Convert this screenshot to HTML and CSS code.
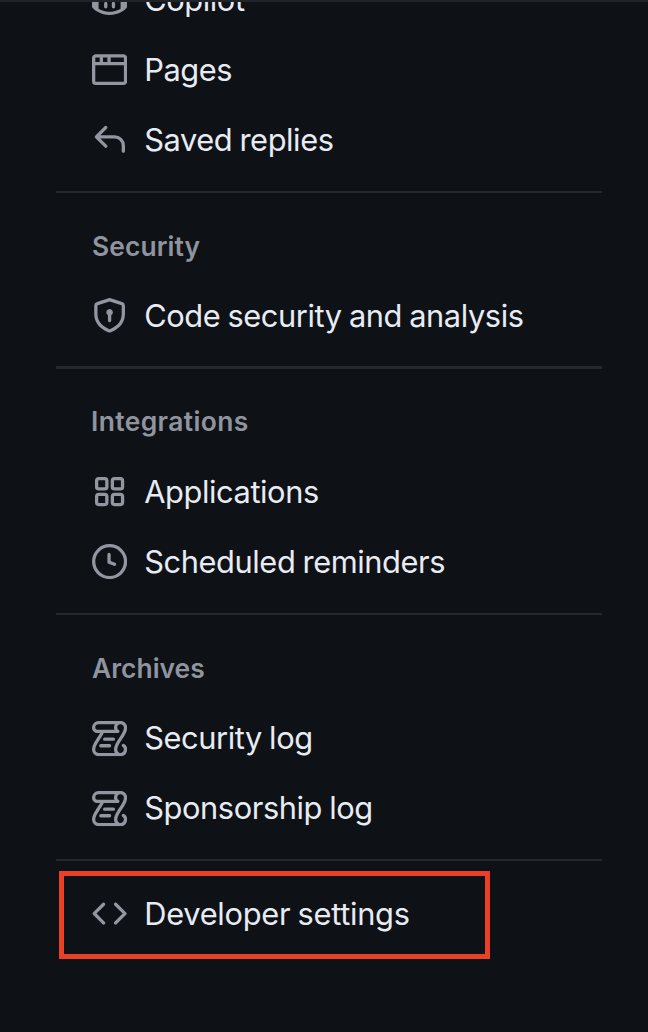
FILE: index.html
```
<!DOCTYPE html>
<html lang="en">
<head>
<meta charset="utf-8">
<title>Settings</title>
<link rel="stylesheet" href="styles.css">
</head>
<body>
<svg class="sprite" aria-hidden="true">
  <symbol id="copilot" viewBox="0 0 16 16"><path d="M7.998 15.035c-4.562 0-7.873-2.914-7.998-3.749V9.338c.085-.628.677-1.686 1.588-2.065.013-.07.024-.143.036-.218.029-.183.06-.384.126-.612-.201-.508-.254-1.084-.254-1.656 0-.87.128-1.769.693-2.484.579-.733 1.494-1.124 2.724-1.261 1.206-.134 2.262.034 2.944.765.05.053.096.108.139.165.044-.057.094-.112.143-.165.682-.731 1.738-.899 2.944-.765 1.23.137 2.145.528 2.724 1.261.566.715.693 1.614.693 2.484 0 .572-.053 1.148-.254 1.656.066.228.098.429.126.612.012.076.024.148.037.218.924.385 1.522 1.471 1.591 2.095v1.872c0 .766-3.351 3.795-8.002 3.795Zm0-1.485c2.28 0 4.584-1.11 5.002-1.433V7.862l-.023-.116c-.49.21-1.075.291-1.727.291-1.146 0-2.059-.327-2.71-.991A3.222 3.222 0 0 1 8 6.303a3.24 3.24 0 0 1-.544.743c-.65.664-1.563.991-2.71.991-.652 0-1.236-.081-1.727-.291l-.023.116v4.255c.419.323 2.722 1.433 5.002 1.433ZM6.25 9.037a.75.75 0 0 1 .75.75v1.501a.75.75 0 0 1-1.5 0V9.787a.75.75 0 0 1 .75-.75Zm4.25.75v1.501a.75.75 0 0 1-1.5 0V9.787a.75.75 0 0 1 1.5 0Z"/></symbol>
  <symbol id="browser" viewBox="0 0 16 16"><path d="M0 2.75C0 1.784.784 1 1.75 1h12.5c.966 0 1.75.784 1.75 1.75v10.5A1.75 1.75 0 0 1 14.25 15H1.75A1.75 1.75 0 0 1 0 13.25ZM14.5 6h-13v7.25c0 .138.112.25.25.25h12.5a.25.25 0 0 0 .25-.25Zm-6-3.5v2h6V2.75a.25.25 0 0 0-.25-.25ZM5 2.5v2h2v-2Zm-3.25 0a.25.25 0 0 0-.25.25V4.5h2v-2Z"/></symbol>
  <symbol id="reply" viewBox="0 0 16 16"><path d="M6.78 1.97a.75.75 0 0 1 0 1.06L3.81 6h6.44A4.75 4.75 0 0 1 15 10.75v2.5a.75.75 0 0 1-1.5 0v-2.5a3.25 3.25 0 0 0-3.25-3.25H3.81l2.97 2.97a.749.749 0 0 1-.326 1.275.749.749 0 0 1-.734-.215L1.47 7.28a.75.75 0 0 1 0-1.06l4.25-4.25a.75.75 0 0 1 1.06 0Z"/></symbol>
  <symbol id="shield" viewBox="0 0 16 16"><path d="m8.533.133 5.25 1.68A1.75 1.75 0 0 1 15 3.48V7c0 1.566-.32 3.182-1.303 4.682-.983 1.498-2.585 2.813-5.032 3.855a1.697 1.697 0 0 1-1.33 0c-2.447-1.042-4.049-2.357-5.032-3.855C1.32 10.182 1 8.566 1 7V3.48a1.75 1.75 0 0 1 1.217-1.667l5.25-1.68a1.748 1.748 0 0 1 1.066 0Zm-.61 1.429.001.001-5.25 1.68a.251.251 0 0 0-.174.237V7c0 1.36.275 2.666 1.057 3.859.784 1.194 2.121 2.342 4.366 3.298a.196.196 0 0 0 .154 0c2.245-.957 3.582-2.103 4.366-3.297C13.225 9.666 13.5 8.358 13.5 7V3.48a.25.25 0 0 0-.174-.238l-5.25-1.68a.25.25 0 0 0-.153 0ZM9.5 6.5c0 .536-.286 1.032-.75 1.3v2.45a.75.75 0 0 1-1.5 0V7.8A1.5 1.5 0 1 1 9.5 6.5Z"/></symbol>
  <symbol id="apps" viewBox="0 0 16 16"><g fill="none" stroke="currentColor" stroke-width="1.5"><rect x="2.1" y="2.1" width="4.65" height="4.65" rx="1"/><rect x="9.25" y="2.1" width="4.65" height="4.65" rx="1"/><rect x="2.1" y="9.25" width="4.65" height="4.65" rx="1"/><rect x="9.25" y="9.25" width="4.65" height="4.65" rx="1"/></g></symbol>
  <symbol id="clock" viewBox="0 0 16 16"><path d="M8 0a8 8 0 1 1 0 16A8 8 0 0 1 8 0ZM1.5 8a6.5 6.5 0 1 0 13 0 6.5 6.5 0 0 0-13 0Zm7-3.25v2.992l2.028.812a.75.75 0 0 1-.557 1.392l-2.5-1A.751.751 0 0 1 7 8.25v-3.5a.75.75 0 0 1 1.5 0Z"/></symbol>
  <symbol id="log" viewBox="0 0 16 16"><path d="M5 8.25a.75.75 0 0 1 .75-.75h4a.75.75 0 0 1 0 1.5h-4A.75.75 0 0 1 5 8.25ZM4 10.5A.75.75 0 0 0 4 12h4a.75.75 0 0 0 0-1.5H4Z"/><path d="M13 0c1.654 0 3 1.328 3 3 0 .982-.338 1.933-.783 2.818-.443.879-1.028 1.758-1.582 2.588l-.011.017c-.568.853-1.104 1.659-1.501 2.446-.398.789-.623 1.494-.623 2.136a1.5 1.5 0 1 0 2.333-1.248.75.75 0 0 1 .834-1.246A3 3 0 0 1 13 16H3a3 3 0 0 1-3-3c0-1.582.891-3.135 1.777-4.506.209-.322.418-.637.623-.946.473-.709.923-1.386 1.287-2.048H2.51c-.576 0-1.381-.133-1.907-.783A2.68 2.68 0 0 1 0 3a3 3 0 0 1 3-3Zm0 1.5A1.5 1.5 0 0 0 11.5 3c0 .476.223.834.667 1.132A.75.75 0 0 1 11.75 5.5H5.368c-.467 1.003-1.141 2.015-1.773 2.963-.192.289-.381.571-.558.845C2.13 10.711 1.5 11.916 1.5 13A1.5 1.5 0 0 0 3 14.5h7.401A2.989 2.989 0 0 1 10 13c0-.979.338-1.928.784-2.812.441-.874 1.023-1.748 1.575-2.576l.017-.026c.568-.853 1.103-1.658 1.501-2.448.398-.79.623-1.497.623-2.143 0-.838-.669-1.495-1.5-1.495Zm-10 0A1.5 1.5 0 0 0 1.5 3c0 .321.1.569.27.778.097.12.325.227.74.227h7.674A2.737 2.737 0 0 1 10 3c0-.546.146-1.059.401-1.5Z"/></symbol>
  <symbol id="code" viewBox="0 0 16 16"><path d="m11.28 3.22 4.25 4.25a.75.75 0 0 1 0 1.06l-4.25 4.25a.749.749 0 0 1-1.275-.326.749.749 0 0 1 .215-.734L13.94 8l-3.72-3.72a.749.749 0 0 1 .326-1.275.749.749 0 0 1 .734.215Zm-6.56 0a.751.751 0 0 1 1.042.018.751.751 0 0 1 .018 1.042L2.06 8l3.72 3.72a.749.749 0 0 1-.326 1.275.749.749 0 0 1-.734-.215L.47 8.53a.75.75 0 0 1 0-1.06Z"/></symbol>
</svg>
<div class="topbar"></div>
<nav class="nav">
  <a class="item"><svg class="icon"><use href="#copilot"/></svg><span>Copilot</span></a>
  <a class="item"><svg class="icon"><use href="#browser"/></svg><span>Pages</span></a>
  <a class="item"><svg class="icon"><use href="#reply"/></svg><span>Saved replies</span></a>
  <div class="divider"></div>
  <h3 class="heading">Security</h3>
  <a class="item"><svg class="icon"><use href="#shield"/></svg><span>Code security and analysis</span></a>
  <div class="divider thick"></div>
  <h3 class="heading integrations">Integrations</h3>
  <a class="item"><svg class="icon"><use href="#apps"/></svg><span>Applications</span></a>
  <a class="item"><svg class="icon"><use href="#clock"/></svg><span>Scheduled reminders</span></a>
  <div class="divider"></div>
  <h3 class="heading archives">Archives</h3>
  <a class="item log"><svg class="icon"><use href="#log"/></svg><span>Security log</span></a>
  <a class="item log"><svg class="icon"><use href="#log"/></svg><span>Sponsorship log</span></a>
  <div class="divider last"></div>
  <a class="item highlighted"><svg class="icon"><use href="#code"/></svg><span>Developer settings</span></a>
</nav>
</body>
</html>
```
FILE: styles.css
```
* { box-sizing: border-box; }
body {
  margin: 0;
  height: 1032px;
  overflow: hidden;
  background: #0e1116;
  color: #e8ecf2;
  font-family: Inter, "Liberation Sans", sans-serif;
}
.sprite { display: none; }
.topbar {
  position: absolute;
  top: 0;
  left: 0;
  right: 0;
  height: 2px;
  z-index: 1;
  background: #202329;
}
.nav {
  display: flex;
  flex-direction: column;
  width: 546px;
  margin: -35px 0 0 56px;
}
.item {
  display: flex;
  align-items: center;
  gap: 17px;
  flex: none;
  height: 70px;
  padding-left: 36px;
  font-size: 30.8px;
  font-weight: 440;
  line-height: 44px;
  letter-spacing: -0.41px;
  word-spacing: -1.1px;
  white-space: nowrap;
}
.log span { padding-bottom: 2px; }
.icon {
  flex: none;
  width: 35.2px;
  height: 35.2px;
  fill: currentColor;
  color: #9196a1;
}
.divider {
  flex: none;
  height: 2px;
  margin-top: 16px;
  background: #25282e;
}
.thick { height: 3px; margin-top: 15px; }
.last { margin-top: 15px; }
.heading {
  flex: none;
  height: 88px;
  margin: 0;
  padding: 35px 0 0 36px;
  color: #8f949f;
  font-size: 26.4px;
  font-weight: 600;
  line-height: 36px;
  letter-spacing: 0.1px;
}
.integrations { padding: 34px 0 0 35px; letter-spacing: 0.4px; }
.archives { height: 89px; letter-spacing: 0; }
.highlighted {
  width: 431px;
  height: 88px;
  margin: 10px 0 0 3px;
  padding: 0 0 2px 28px;
  border: 5px solid #ea4025;
  letter-spacing: -0.28px;
}
```
